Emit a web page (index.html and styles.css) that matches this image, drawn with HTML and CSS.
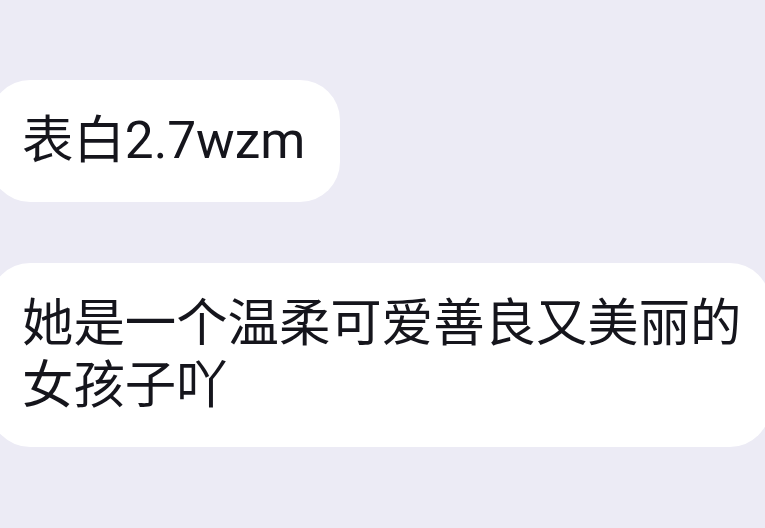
FILE: index.html
```html
<!DOCTYPE html>
<html lang="zh-CN">
<head>
<meta charset="utf-8">
<link rel="stylesheet" href="styles.css">
</head>
<body>
<main class="chat">
  <div class="bubble">表白2.7wzm</div>
  <div class="bubble">她是一个温柔可爱善良又美丽的女孩子吖</div>
</main>
</body>
</html>
```
FILE: styles.css
```css
html, body {
  margin: 0;
  padding: 0;
  background: #ecebf5;
  overflow: hidden;
  width: 765px;
  height: 528px;
}
.chat {
  display: flex;
  flex-direction: column;
  align-items: flex-start;
  gap: 61px;
  padding-top: 80px;
  margin-left: -10px;
  width: 780px;
}
.bubble {
  background: #ffffff;
  border-radius: 40px;
  padding: 30px 35px 30px 32px;
  max-width: 722px;
  font-family: "Roboto", "Noto Sans CJK SC", sans-serif;
  font-size: 51.4px;
  line-height: 62px;
  color: #15151c;
}
.bubble + .bubble {
  padding-right: 26px;
}
```
